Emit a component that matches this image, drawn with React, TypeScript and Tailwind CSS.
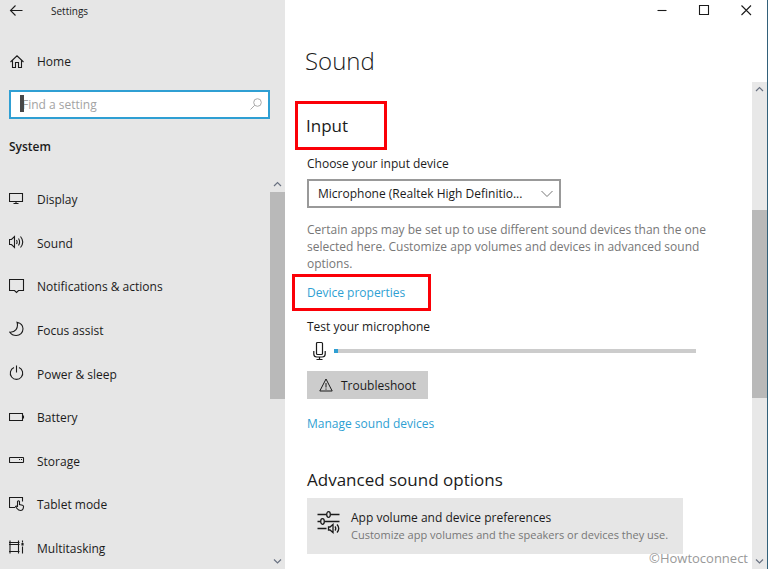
import { useState } from "react";
import type { ReactNode } from "react";

interface NavItem {
  label: string;
  icon: ReactNode;
}

function Icon({ children }: { children: ReactNode }) {
  return (
    <svg
      className="h-4 w-4 shrink-0"
      viewBox="0 0 16 16"
      fill="none"
      stroke="currentColor"
      strokeWidth="1.1"
      aria-hidden="true"
    >
      {children}
    </svg>
  );
}

const navItems: NavItem[] = [
  {
    label: "Display",
    icon: (
      <Icon>
        <path d="M.5 2.5h13v8H.5zM7 10.5v2M4.500 12.500h5" />
      </Icon>
    ),
  },
  {
    label: "Sound",
    icon: (
      <Icon>
        <path d="M.5 5.500h2l3-3v11l-3-3h-2zM7.500 6q1.200 2 0 4M9.500 4.500q2.200 3.500 0 7M11.500 2.500q4.500 5.500 0 11" />
      </Icon>
    ),
  },
  {
    label: "Notifications & actions",
    icon: (
      <Icon>
        <path d="M.5 1.500h14v11H9.500l-2 2-2-2h-5z" />
      </Icon>
    ),
  },
  {
    label: "Focus assist",
    icon: (
      <Icon>
        <path d="M8 1.200c3.500.8 6 3.300 6 6.600 0 3.800-3 6.700-6.800 6.700-2.800 0-5-1.200-6.400-3.300C6 11.500 9.800 7.500 8 1.200z" />
      </Icon>
    ),
  },
  {
    label: "Power & sleep",
    icon: (
      <Icon>
        <path d="M7.500.5v7M5 2.500a6.200 6.200 0 1 0 5 0" />
      </Icon>
    ),
  },
  {
    label: "Battery",
    icon: (
      <Icon>
        <path d="M.5 4.500h13v7H.5zM14.500 6.500v3" />
      </Icon>
    ),
  },
  {
    label: "Storage",
    icon: (
      <Icon>
        <rect x=".5" y="5.500" width="14" height="5" rx=".5" />
        <path d="M10 7.500h1M12 7.500h1" />
      </Icon>
    ),
  },
  {
    label: "Tablet mode",
    icon: (
      <Icon>
        <path d="M6 11.500H.5v-10h13v4" />
        <path d="M8.500 11V5.500q1-1.500 2 0v3l3 .8q1.200.4 1 1.700c-.2 2-1 3.500-2.800 3.500-2 0-2.700-.7-3.700-2l-1.500-2q.8-1.200 2 .5" />
      </Icon>
    ),
  },
  {
    label: "Multitasking",
    icon: (
      <Icon>
        <path d="M0 3.500h10.500M0 5.500h10.500M0 12.500h10.500M1 1.500v13M9.500 1.500v13M13.500 1.500v2M13.500 7.500v7" />
        <path d="M13 4.500h1v1.500h-1z" fill="currentColor" />
      </Icon>
    ),
  },
];

function Chevron({ up = false }: { up?: boolean }) {
  return (
    <svg
      className="h-[15px] w-[15px] shrink-0 text-gray-500"
      viewBox="0 0 15 15"
      fill="none"
      stroke="currentColor"
      strokeWidth="1.2"
      aria-hidden="true"
    >
      <path d={up ? "M4 9l3.500-3.500L11 9" : "M4 5.500L7.500 9 11 5.500"} />
    </svg>
  );
}

function Sidebar() {
  const [query, setQuery] = useState("");

  return (
    <aside className="flex w-[285px] shrink-0 flex-col bg-[#e6e6e6]">
      <header className="flex h-[22px] items-center gap-[26px] pl-[9px] text-[10px]">
        <button type="button" aria-label="Back">
          <Icon>
            <path d="M1.500 7.500h12M6.500 2.500l-5 5 5 5" />
          </Icon>
        </button>
        <span>Settings</span>
      </header>

      <a href="#home" className="mt-7 flex h-6 items-center gap-3 pl-[9px]">
        <Icon>
          <path d="M1.500 8L8 1.800 14.500 8M3.500 6.500v7h3V8.500h3v5h3v-7" />
        </Icon>
        Home
      </a>

      <div className="relative mt-4 mr-[15px] ml-[9px]">
        <input
          type="search"
          aria-label="Find a setting"
          placeholder="Find a setting"
          value={query}
          onChange={(e) => setQuery(e.target.value)}
          className="block h-[29px] w-full appearance-none border-2 border-[#2f9fd3] bg-white pr-8 pl-[11px] placeholder:text-[#a3a3a3] focus:outline-none"
        />
        <span className="absolute top-[5px] left-[11px] h-[17px] w-1 bg-[#484848]" />
        <svg
          className="absolute top-2 right-2 h-3 w-3 text-[#aaa]"
          viewBox="0 0 12 12"
          fill="none"
          stroke="currentColor"
          aria-hidden="true"
        >
          <circle cx="7.500" cy="4.500" r="3.800" />
          <path d="M4.800 7.200L.5 11.500" />
        </svg>
      </div>

      <h2 className="mt-[18px] pl-[9px] leading-5 font-semibold">System</h2>

      <div className="mt-5 flex min-h-0 flex-1">
        <nav className="flex flex-1 flex-col pl-[9px]">
          {navItems.map((item) => (
            <a
              key={item.label}
              href={`#${item.label}`}
              className="flex flex-1 items-center gap-3"
            >
              {item.icon}
              <span className="pt-[3px]">{item.label}</span>
            </a>
          ))}
        </nav>
        <div className="flex w-[15px] flex-col justify-between">
          <div className="flex-1">
            <Chevron up />
            <div className="h-[207px] bg-[#b9b9b9]" />
          </div>
          <Chevron />
        </div>
      </div>
    </aside>
  );
}

function WindowControls() {
  return (
    <div className="flex h-[22px] justify-end">
      <button type="button" aria-label="Minimize" className="flex w-[42px] items-center justify-center">
        <Icon>
          <path d="M3.500 7.500h9" />
        </Icon>
      </button>
      <button type="button" aria-label="Maximize" className="flex w-[42px] items-center justify-center">
        <Icon>
          <path d="M3.500 2.500h9v9h-9z" />
        </Icon>
      </button>
      <button type="button" aria-label="Close" className="flex w-[42px] items-center justify-center">
        <Icon>
          <path d="M3.500 2.500l9.500 9.500M13 2.500L3.500 12" />
        </Icon>
      </button>
    </div>
  );
}

function InputSection() {
  return (
    <section className="flex flex-col items-start">
      <h2 className="mt-[19px] -ml-3 flex h-[49px] w-[92px] items-center border-3 border-[#fb0007] pl-2 text-[17px] leading-6">
        Input
      </h2>

      <label htmlFor="input-device" className="mt-1 leading-5">
        Choose your input device
      </label>
      <div className="relative mt-[5px] w-[254px]">
        <select
          id="input-device"
          className="block h-[29px] w-full appearance-none border-2 border-[#999] bg-white pr-8 pl-[9px]"
        >
          <option>Microphone (Realtek High Definitio...</option>
        </select>
        <svg
          className="pointer-events-none absolute top-[11px] right-2 h-2 w-3 text-[#777]"
          viewBox="0 0 12 8"
          fill="none"
          stroke="currentColor"
          aria-hidden="true"
        >
          <path d="M.5 1L6 6.500 11.500 1" />
        </svg>
      </div>

      <p className="mt-[13px] max-w-[415px] leading-[17px] text-[#777]">
        Certain apps may be set up to use different sound devices than the one
        selected here. Customize app volumes and devices in advanced sound
        options.
      </p>

      <a
        href="#device-properties"
        className="mt-[2px] -ml-[15px] flex h-[37px] w-[139px] items-center border-3 border-[#fb0007] pl-3 leading-4 text-[#2f9fd3]"
      >
        Device properties
      </a>

      <h3 className="mt-[6px] leading-5">Test your microphone</h3>
      <div className="mt-1 flex w-[389px] max-w-full items-center gap-2 pl-[6px]">
        <svg
          className="h-5 w-[13px] shrink-0"
          viewBox="0 0 13 20"
          fill="none"
          stroke="currentColor"
          strokeWidth="1.200"
          aria-hidden="true"
        >
          <rect x="3.500" y="1.500" width="6" height="12" rx="1" />
          <path d="M.8 10v3q0 3 3 3h5.400q3 0 3-3v-3M6.500 16v2.500M3.500 18.500h6" />
        </svg>
        <div
          role="meter"
          aria-label="Microphone level"
          aria-valuenow={1}
          aria-valuemin={0}
          aria-valuemax={100}
          className="h-1 flex-1 bg-[#ccc]"
        >
          <div className="h-1 w-1 bg-[#2f9fd3]" />
        </div>
      </div>

      <button
        type="button"
        className="mt-[10px] flex h-7 items-center gap-2 bg-[#ccc] px-3"
      >
        <svg
          className="h-[14px] w-[14px]"
          viewBox="0 0 14 14"
          fill="none"
          stroke="currentColor"
          aria-hidden="true"
        >
          <path d="M7 1L13.200 13H.8zM7 5v4.500M7 10.500v1.200" />
        </svg>
        <span className="pt-[2px]">Troubleshoot</span>
      </button>

      <a href="#manage" className="mt-[15px] leading-5 text-[#2f9fd3]">
        Manage sound devices
      </a>
    </section>
  );
}

function AdvancedSection() {
  return (
    <section className="mt-[34px]">
      <h2 className="text-[17px] leading-6">Advanced sound options</h2>
      <button
        type="button"
        className="mt-[6px] flex h-14 w-[376px] max-w-full items-center gap-[10px] bg-[#e6e6e6] pl-[10px] text-left"
      >
        <svg
          className="mb-2 h-6 w-6 shrink-0"
          viewBox="0 0 24 24"
          fill="none"
          stroke="currentColor"
          strokeWidth="1.300"
          aria-hidden="true"
        >
          <path d="M.5 4.500h9M13.500 4.500h9M.5 11.500h3M7.500 11.500h15M.5 18.500h9" />
          <ellipse cx="11.500" cy="4.500" rx="1.800" ry="2.800" />
          <ellipse cx="5.500" cy="11.500" rx="1.800" ry="2.800" />
          <path d="M11.500 17H13l3-2.500v8L13 20h-1.500zM18 16.500q1.500 2 0 4M20 14.500q3.500 4 0 8" />
        </svg>
        <span>
          <span className="block leading-[17px]">
            App volume and device preferences
          </span>
          <span className="block text-[11px] leading-[17px] text-[#777]">
            Customize app volumes and the speakers or devices they use.
          </span>
        </span>
      </button>
    </section>
  );
}

export default function App() {
  return (
    <div className="relative flex h-screen overflow-hidden bg-white font-['Open_Sans','Noto_Sans',sans-serif] text-[12px] text-[#1b1b1b]">
      <Sidebar />

      <main className="flex min-w-0 flex-1 flex-col border-r border-[#33617a]">
        <WindowControls />
        <h1 className="mt-5 h-10 pl-5 text-[24px] leading-[38px] font-light">
          Sound
        </h1>

        <div className="flex min-h-0 flex-1">
          <div className="min-w-0 flex-1 pl-[22px]">
            <InputSection />
            <AdvancedSection />
          </div>
          <div className="flex w-[15px] flex-col bg-[#e8e8e8]">
            <Chevron up />
            <div className="mt-[113px] h-[188px] bg-[#b9b9b9]" />
            <div className="flex-1" />
            <Chevron />
          </div>
        </div>
      </main>

      <p className="absolute right-5 bottom-0 text-[13px] leading-[22px] text-[#999]">
        ©Howtoconnect
      </p>
    </div>
  );
}
